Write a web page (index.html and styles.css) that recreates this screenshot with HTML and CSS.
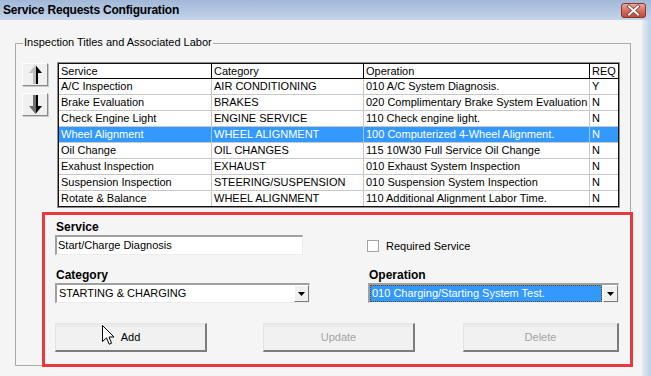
FILE: index.html
```html
<!DOCTYPE html>
<html>
<head>
<meta charset="utf-8">
<title>Service Requests Configuration</title>
<link rel="stylesheet" href="styles.css">
</head>
<body>
<div class="window">
  <div class="titlebar">
    <span class="title">Service Requests Configuration</span>
    <span class="close">
      <svg width="25" height="15" viewBox="0 0 25 15">
        <defs>
          <linearGradient id="cg" x1="0" y1="0" x2="0" y2="1">
            <stop offset="0" stop-color="#eab0a6"/>
            <stop offset="0.5" stop-color="#d5705f"/>
            <stop offset="1" stop-color="#c04a38"/>
          </linearGradient>
        </defs>
        <rect x="0.5" y="0.5" width="24" height="14" rx="2.5" fill="url(#cg)" stroke="#8e3328"/>
        <path d="M8 3.5 L17 11.5 M17 3.5 L8 11.5" stroke="#7a3a32" stroke-width="3.6" stroke-linecap="square"/>
        <path d="M8 3.5 L17 11.5 M17 3.5 L8 11.5" stroke="#ffffff" stroke-width="2" stroke-linecap="square"/>
      </svg>
    </span>
  </div>
  <div class="client">
    <div class="main">
      <div class="group">
        <div class="legend">Inspection Titles and Associated Labor</div>
        <div class="toprow">
          <div class="arrows">
            <div class="arrowbtn">
              <svg width="13" height="19" viewBox="0 0 13 19">
                <defs>
                  <linearGradient id="ug" x1="0" y1="0" x2="1" y2="0">
                    <stop offset="0.5" stop-color="#bdbdbd"/>
                    <stop offset="0.5" stop-color="#000"/>
                  </linearGradient>
                </defs>
                <path d="M6.5 0 L13 8 L9 8 L9 19 L4 19 L4 8 L0 8 Z" fill="url(#ug)"/>
              </svg>
            </div>
            <div class="arrowbtn">
              <svg width="13" height="19" viewBox="0 0 13 19">
                <defs>
                  <linearGradient id="dg" x1="0" y1="0" x2="1" y2="0">
                    <stop offset="0.5" stop-color="#707070"/>
                    <stop offset="0.5" stop-color="#000"/>
                  </linearGradient>
                </defs>
                <path d="M4 0 L9 0 L9 11 L13 11 L6.5 19 L0 11 L4 11 Z" fill="url(#dg)"/>
              </svg>
            </div>
          </div>
          <div class="gridwrap">
            <div class="grid">
              <div class="hd">Service</div><div class="hd">Category</div><div class="hd">Operation</div><div class="hd last">REQ</div>
              <div class="c">A/C Inspection</div><div class="c">AIR CONDITIONING</div><div class="c">010 A/C System Diagnosis.</div><div class="c last">Y</div>
              <div class="c">Brake Evaluation</div><div class="c">BRAKES</div><div class="c">020 Complimentary Brake System Evaluation</div><div class="c last">N</div>
              <div class="c">Check Engine Light</div><div class="c">ENGINE SERVICE</div><div class="c">110 Check engine light.</div><div class="c last">N</div>
              <div class="c sel">Wheel Alignment</div><div class="c sel">WHEEL ALIGNMENT</div><div class="c sel">100 Computerized 4-Wheel Alignment.</div><div class="c last sel">N</div>
              <div class="c">Oil Change</div><div class="c">OIL CHANGES</div><div class="c">115 10W30 Full Service Oil Change</div><div class="c last">N</div>
              <div class="c">Exahust Inspection</div><div class="c">EXHAUST</div><div class="c">010 Exhaust System Inspection</div><div class="c last">N</div>
              <div class="c">Suspension Inspection</div><div class="c">STEERING/SUSPENSION</div><div class="c">010 Suspension System Inspection</div><div class="c last">N</div>
              <div class="c end">Rotate &amp; Balance</div><div class="c end">WHEEL ALIGNMENT</div><div class="c end">110 Additional Alignment Labor Time.</div><div class="c last end">N</div>
            </div>
          </div>
        </div>
        <div class="form">
          <div class="formgrid">
            <div class="field">
              <div class="label">Service</div>
              <div class="textbox">Start/Charge Diagnosis</div>
            </div>
            <div class="field checkfield">
              <span class="checkbox"></span>
              <span class="checklabel">Required Service</span>
            </div>
            <div class="field row2">
              <div class="label">Category</div>
              <div class="select">
                <span class="val">STARTING &amp; CHARGING</span>
                <span class="dd"><svg width="7" height="4" viewBox="0 0 7 4"><path d="M0 0 L7 0 L3.5 4 Z" fill="#000"/></svg></span>
              </div>
            </div>
            <div class="field row2">
              <div class="label">Operation</div>
              <div class="select op">
                <span class="val focus">010 Charging/Starting System Test.</span>
                <span class="dd"><svg width="7" height="4" viewBox="0 0 7 4"><path d="M0 0 L7 0 L3.5 4 Z" fill="#000"/></svg></span>
              </div>
            </div>
          </div>
          <div class="buttons">
            <div class="btn add">Add
              <svg class="cursor" width="13" height="21" viewBox="0 0 13 21">
                <path d="M0.5 0.5 L0.5 16.5 L4.5 12.8 L7.2 19.2 L9.6 18.2 L7 12 L12 12 Z" fill="#fff" stroke="#000" stroke-width="1" stroke-linejoin="miter"/>
              </svg>
            </div>
            <div class="btn disabled update">Update</div>
            <div class="btn disabled delete">Delete</div>
          </div>
        </div>
      </div>
    </div>
    <div class="rightedge"></div>
  </div>
</div>
</body>
</html>
```
FILE: styles.css
```css
* { box-sizing: border-box; }
html, body {
  margin: 0;
  padding: 0;
  width: 651px;
  height: 376px;
  overflow: hidden;
  background: #f5f5f5;
  font-family: "Liberation Sans", Arial, sans-serif;
  font-size: 11px;
  color: #000;
}
.window {
  display: flex;
  flex-direction: column;
  height: 376px;
}
.titlebar {
  height: 20px;
  flex: none;
  display: flex;
  align-items: center;
  justify-content: space-between;
  padding: 0 5px 0 3px;
  background: linear-gradient(#a2b8d8, #c4d4ea);
}
.title {
  font-weight: bold;
  font-size: 12px;
  line-height: 16px;
  letter-spacing: -0.2px;
}
.close {
  display: flex;
  margin-top: 1px;
}
.client {
  flex: 1;
  display: flex;
}
.main {
  flex: 1;
  padding: 23px 0 0 15px;
}
.rightedge {
  width: 9px;
  background: linear-gradient(to right, #e6edf6, #bccfe7);
}
.group {
  width: 616px;
  height: 323px;
  border: 1px solid #a9a9a9;
}
.legend {
  display: block;
  width: max-content;
  margin: -8px 0 0 7px;
  padding: 0 1px;
  background: #f5f5f5;
  line-height: 13px;
}
.toprow {
  display: flex;
  margin-top: 13px;
  padding-left: 6px;
}
.arrows {
  display: flex;
  flex-direction: column;
  gap: 7px;
  margin-top: 1px;
  margin-right: 9px;
}
.arrowbtn {
  width: 26px;
  height: 23px;
  display: flex;
  align-items: center;
  justify-content: center;
  background: #f0f0f0;
  border-top: 1px solid #fff;
  border-left: 1px solid #fff;
  border-right: 1px solid #8a8a8a;
  border-bottom: 1px solid #8a8a8a;
  box-shadow: 1px 1px 0 #c8c8c8;
}
.gridwrap {
  border: 1px solid #8e8e8e;
}
.grid {
  display: grid;
  grid-template-columns: 153px 152px 226px 28px;
  border: 1px solid #111;
  background: #fff;
}
.hd {
  height: 15px;
  line-height: 14px;
  padding-left: 2px;
  border-right: 1px solid #000;
  border-bottom: 1px solid #000;
  white-space: nowrap;
  overflow: hidden;
}
.c {
  height: 16px;
  line-height: 15px;
  padding-left: 2px;
  border-right: 1px solid #c8c8c8;
  border-bottom: 1px solid #c8c8c8;
  white-space: nowrap;
  overflow: hidden;
}
.c.end { border-bottom: none; height: 15px; }
.last { border-right: none; }
.c.sel {
  background: #3399ff;
  color: #fff;
  border-right-color: #9cc8f4;
}
.form {
  margin: 4px 0 0 26px;
  width: 591px;
  height: 155px;
  border: 3px solid #e8393e;
  padding: 4px 0 0 10px;
  position: relative;
}
.formgrid {
  display: grid;
  grid-template-columns: 255px 251px;
  column-gap: 58px;
}
.label {
  font-weight: bold;
  font-size: 12px;
  line-height: 16px;
  padding-left: 1px;
}
.textbox {
  width: 248px;
  height: 20px;
  background: #fff;
  border-top: 2px solid #a0a0a0;
  border-left: 2px solid #a0a0a0;
  border-right: 1px solid #ececec;
  border-bottom: 1px solid #ececec;
  line-height: 17px;
  padding-left: 1px;
}
.checkfield {
  display: flex;
  align-items: center;
  gap: 7px;
  padding-top: 17px;
  margin-left: -1px;
  height: 36px;
}
.checkbox {
  width: 12px;
  height: 12px;
  background: #fdfdfd;
  border: 1px solid #a4a4a4;
}
.checklabel { line-height: 14px; }
.row2 { margin-top: 12px; }
.select {
  display: flex;
  height: 20px;
  background: #fff;
  border-top: 2px solid #a0a0a0;
  border-left: 2px solid #a0a0a0;
  border-right: 1px solid #ececec;
  border-bottom: 1px solid #ececec;
}
.select .val {
  flex: 1;
  line-height: 16px;
  padding-left: 2px;
  white-space: nowrap;
}
.select .val.focus {
  background: #3399ff;
  color: #fff;
  border: 1px dotted #6b4410;
  line-height: 14px;
  padding-left: 1px;
  margin-right: 1px;
}
.dd {
  width: 15px;
  height: 17px;
  display: flex;
  align-items: center;
  justify-content: center;
  background: #f0f0f0;
  border-top: 1px solid #fff;
  border-left: 1px solid #fff;
  border-right: 1px solid #7a7a7a;
  border-bottom: 1px solid #7a7a7a;
}
.buttons {
  display: flex;
  margin-top: 20px;
}
.btn {
  position: relative;
  width: 152px;
  height: 29px;
  display: flex;
  align-items: center;
  justify-content: center;
  background: linear-gradient(#eaeaea 0, #eaeaea 3px, #f1f1f1 3px);
  border-top: 1px solid #e4e4e4;
  border-left: 1px solid #e4e4e4;
  border-right: 2px solid #7c7c7c;
  border-bottom: 2px solid #7c7c7c;
}
.btn.disabled { color: #a3a3a3; }
.update { margin-left: 56px; }
.delete { margin-left: 48px; width: 156px; }
.cursor {
  position: absolute;
  left: 46px;
  top: 1px;
}
```
